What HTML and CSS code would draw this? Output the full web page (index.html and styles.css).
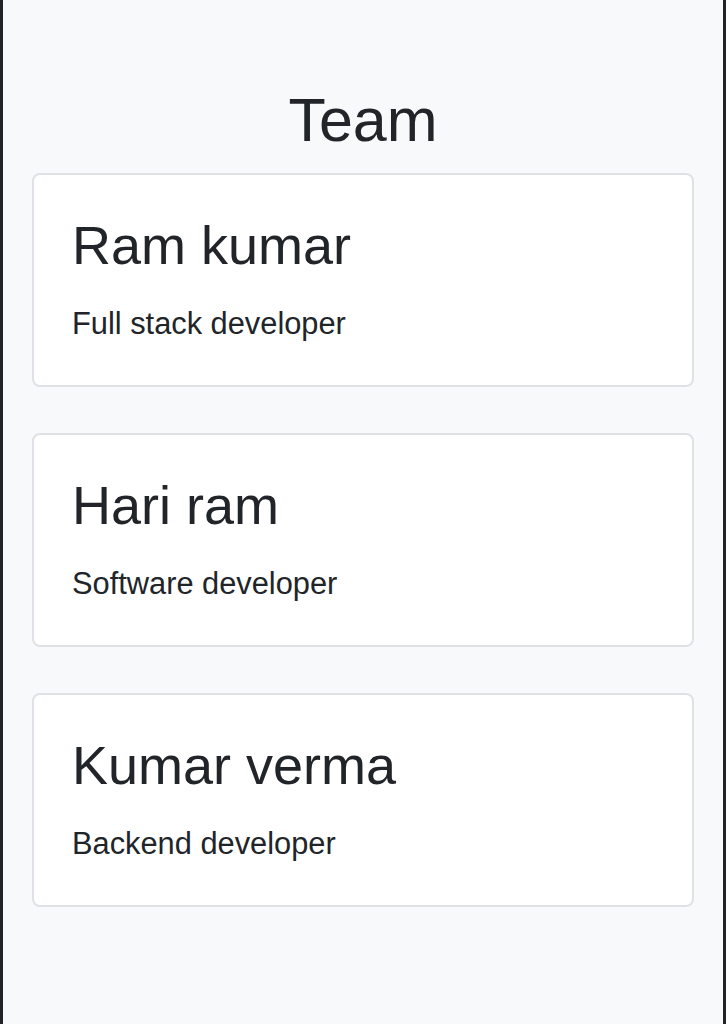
FILE: index.html
```html
<!DOCTYPE html>
<html lang="en">
<head>
<meta charset="utf-8">
<title>Team</title>
<link rel="stylesheet" href="styles.css">
</head>
<body>
<main class="page">
  <h1 class="title">Team</h1>
  <section class="cards">
    <div class="card">
      <h2 class="card-name">Ram kumar</h2>
      <p class="card-role">Full stack developer</p>
    </div>
    <div class="card">
      <h2 class="card-name">Hari ram</h2>
      <p class="card-role">Software developer</p>
    </div>
    <div class="card">
      <h2 class="card-name">Kumar verma</h2>
      <p class="card-role">Backend developer</p>
    </div>
  </section>
</main>
</body>
</html>
```

FILE: styles.css
```css
html {
  background: #212529;
}
body {
  margin: 0 3px;
  min-height: 100vh;
  background: #f8f9fa;
  color: #212529;
  font-family: "Liberation Sans", Arial, sans-serif;
}
.page {
  width: 662px;
  margin: 0 auto;
  padding-top: 84px;
}
.title {
  margin: 0 0 16px;
  font-size: 61px;
  font-weight: 400;
  line-height: 1.2;
  text-align: center;
}
.cards {
  display: flex;
  flex-direction: column;
  gap: 46px;
}
.card {
  height: 214px;
  box-sizing: border-box;
  background: #fff;
  border: 2px solid #dee2e6;
  border-radius: 8px;
  padding: 38px 38px 0;
}
.card-name {
  margin: 0 0 23px;
  font-size: 54px;
  font-weight: 400;
  line-height: 1.2;
}
.card-role {
  margin: 0;
  font-size: 30.8px;
  line-height: 1.5;
}
```
